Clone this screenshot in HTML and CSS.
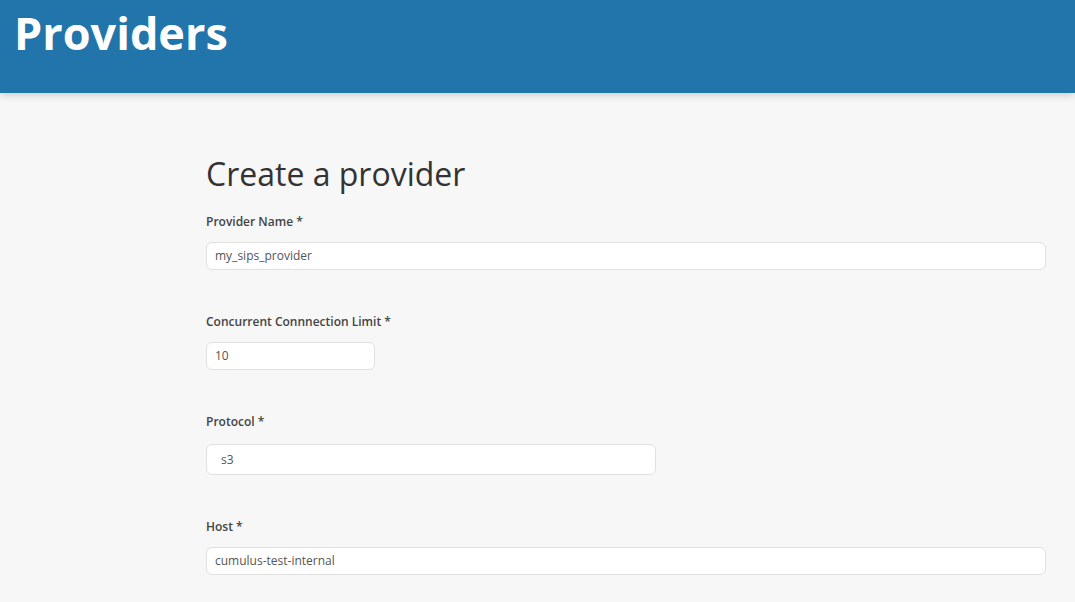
FILE: index.html
```html
<!DOCTYPE html>
<html>
<head>
<meta charset="utf-8">
<link rel="stylesheet" href="styles.css">
</head>
<body>
<header class="page-header">
  <h1 class="page-title">Providers</h1>
</header>
<main class="content">
  <h2 class="form-title">Create a provider</h2>
  <form class="form">
    <div class="field">
      <label class="label">Provider Name *</label>
      <div class="input input-full">my_sips_provider</div>
    </div>
    <div class="field">
      <label class="label">Concurrent Connnection Limit *</label>
      <div class="input input-small">10</div>
    </div>
    <div class="field field-select">
      <label class="label">Protocol *</label>
      <div class="input input-select">s3</div>
    </div>
    <div class="field">
      <label class="label">Host *</label>
      <div class="input input-full">cumulus-test-internal</div>
    </div>
  </form>
</main>
</body>
</html>
```
FILE: styles.css
```css
* { box-sizing: border-box; }
html, body { margin: 0; padding: 0; }
body {
  background: #f7f7f7;
  font-family: "Open Sans", "Liberation Sans", sans-serif;
  color: #333;
  overflow: hidden;
  height: 602px;
}
.page-header {
  background: #2275aa;
  height: 93px;
  box-shadow: 0 2px 8px rgba(0,0,0,0.18);
  padding: 0 14px;
  position: relative;
  z-index: 1;
}
.page-title {
  margin: 0;
  color: #fff;
  font-size: 45px;
  font-weight: 700;
  line-height: 66px;
}
.content {
  padding: 0 29px 0 206px;
}
.form-title {
  margin: 0;
  padding-top: 59px;
  font-size: 32px;
  font-weight: 400;
  line-height: 44px;
  color: #333;
}
.form {
  display: flex;
  flex-direction: column;
}
.field {
  display: flex;
  flex-direction: column;
  align-items: flex-start;
}
.label {
  font-size: 12px;
  font-weight: 600;
  color: #444;
  line-height: 16px;
  margin-top: 18px;
  margin-bottom: 12px;
}
.field + .field .label { margin-top: 44px; }
.field-select .label { margin-bottom: 14px; }
.input {
  background: #fff;
  border: 1px solid #e0e0e0;
  border-radius: 6px;
  height: 28px;
  font-size: 12px;
  color: #555;
  line-height: 26px;
  padding: 0 8px;
}
.input-full { width: 840px; }
.input-small { width: 169px; }
.input-select { width: 450px; height: 31px; line-height: 29px; padding-left: 14px; }
```
